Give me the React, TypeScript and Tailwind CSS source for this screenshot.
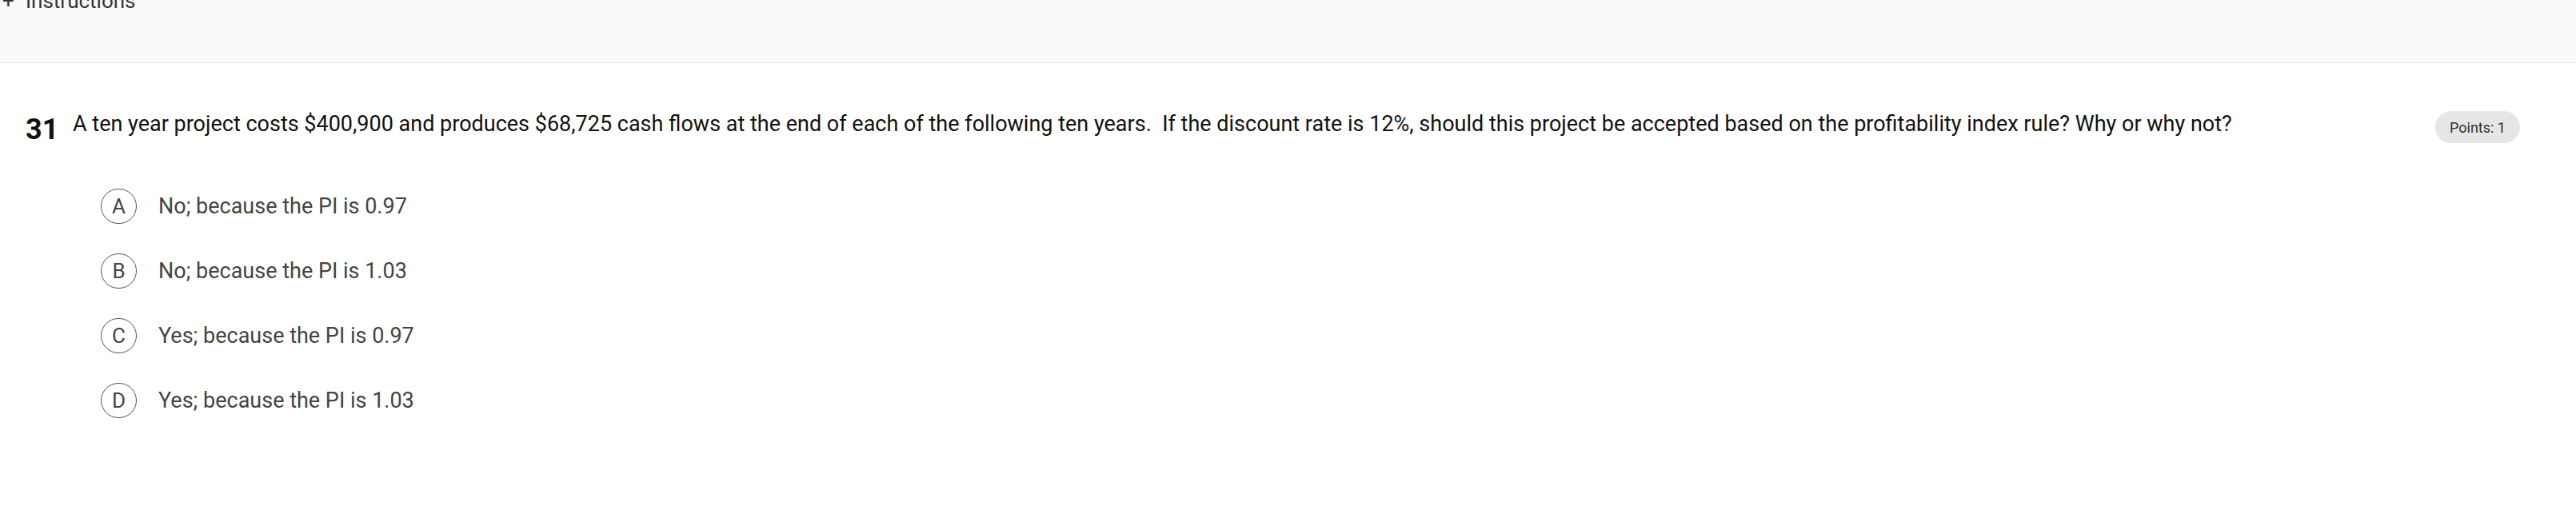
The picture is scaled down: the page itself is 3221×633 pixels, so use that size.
import React from 'react';

const OPTIONS = [
  { letter: 'A', text: 'No; because the PI is 0.97' },
  { letter: 'B', text: 'No; because the PI is 1.03' },
  { letter: 'C', text: 'Yes; because the PI is 0.97' },
  { letter: 'D', text: 'Yes; because the PI is 1.03' },
];

const App: React.FC = () => {
  return (
    <div className="min-h-screen bg-white font-['Roboto','Liberation_Sans',sans-serif]">
      {/* Instructions band (collapsed) */}
      <div className="h-[79px] bg-[#fafafa] border-b border-[#e5e5e5] overflow-hidden">
        <div className="flex items-start -mt-[12px] text-[26px] leading-none text-[#333]">
          <span className="ml-[3px] w-[29px]">+</span>
          <span>Instructions</span>
        </div>
      </div>

      {/* Question */}
      <div className="pt-[58px]">
        <div className="flex items-start pr-[70px]">
          <span className="ml-[32px] mt-[7px] w-[59px] text-[36px] leading-none font-bold text-[#111]">31</span>
          <p className="flex-1 text-[27px] leading-[37.5px] text-[#111] whitespace-pre-wrap">
            {'A ten year project costs $400,900 and produces $68,725 cash flows at the end of each of the following ten years.  If the discount rate is 12%, should this project be accepted based on the profitability index rule? Why or why not?'}
          </p>
          <span className="mt-[2px] h-[40px] px-[18px] flex items-center rounded-full bg-[#e6e6e6] text-[18px] text-[#333]">
            Points: 1
          </span>
        </div>

        <div className="mt-[56px] ml-[126px] flex flex-col gap-[37px]">
          {OPTIONS.map((o) => (
            <div key={o.letter} className="flex items-center gap-[27px]">
              <span className="w-[45px] h-[44px] rounded-full border-[1.5px] border-[#555] flex items-center justify-center text-[26px] text-[#444]">
                {o.letter}
              </span>
              <span className="text-[27px] text-[#444]">{o.text}</span>
            </div>
          ))}
        </div>
      </div>
    </div>
  );
};

export default App;
